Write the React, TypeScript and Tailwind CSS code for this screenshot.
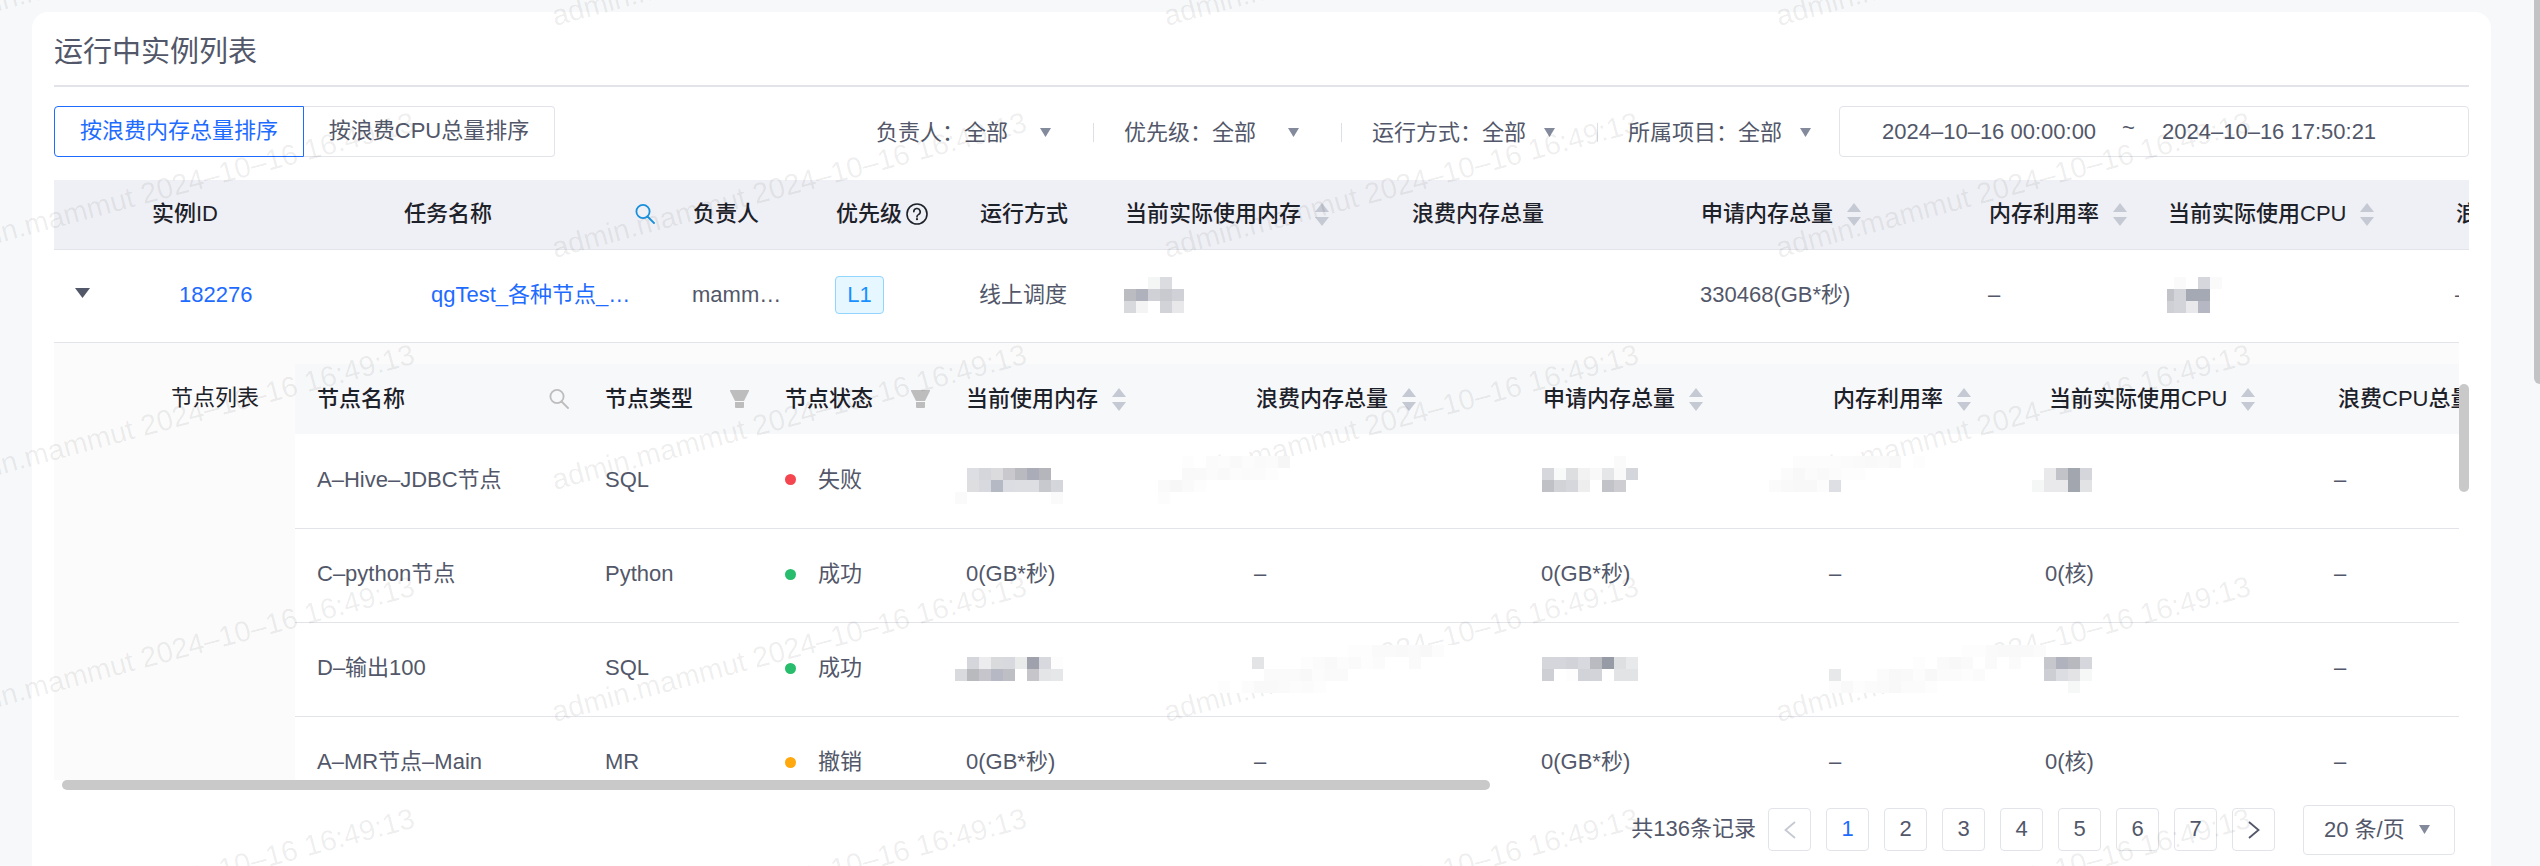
import { useState } from "react"
import type { ReactNode } from "react"

interface MosaicRun {
    x: number
    row: number
    colors: string
}

interface NodeRow {
    name: string
    type: string
    status: "失败" | "成功" | "撤销"
    memory: string
    wasted: string
    applied: string
    usage: string
    cpu: string
    wastedCpu: string
    masked?: MosaicRun[]
}

const CELL = 12

const instanceMemoryMosaic: MosaicRun[] = [
    { x: 24, row: 0, colors: "f4f5f5 dbdcdf" },
    { x: 0, row: 1, colors: "bbbcc2 afb2bd d0d1d6 c9cacf d0d1d6" },
    { x: 0, row: 2, colors: "d8d9dc f4f4f5 ffffff d2d3d8 e8e8ea" },
]

const instanceCpuMosaic: MosaicRun[] = [
    { x: 7, row: 0, colors: "fafafa ffffff d6d7dc fafafa" },
    { x: -5, row: 1, colors: "c2c3c8 d3d4d9 a5a9b3 a5a9b3" },
    { x: -5, row: 2, colors: "cfd0d5 d3d4d9 e9e9eb b5b8c3" },
]

const hiveMosaic: MosaicRun[] = [
    { x: 12, row: 1, colors: "dddee3 d5d6db dbdbdd c8c8cd b9babf aaadb7 b5b6bb" },
    { x: 12, row: 2, colors: "dedee0 d8d9de b5b9c4 dcdde2 dddee2 dddee2 c8c9ce d5d6db" },
    { x: 0, row: 3, colors: "fafafa" },
    { x: 96, row: 3, colors: "fafafa" },
    { x: 227, row: 0, colors: "fdfdfd ffffff fbfbfb fcfcfc f9f9f9 fcfcfc fafafa fbfbfb f6f6f6" },
    { x: 227, row: 1, colors: "f9f9f9 f9f9f9 fbfbfb f9f9f9 fcfcfc fbfbfb fbfbfb fdfdfd" },
    { x: 203, row: 2, colors: "fafafa f7f7f7 fafafa fdfdfd" },
    { x: 203, row: 3, colors: "fcfcfc" },
    { x: 659, row: 0, colors: "fafafa" },
    { x: 587, row: 1, colors: "d6d7dc f8fafa dddee0 f2f2f2 f9f9f9 e5e6e7 f9f9f9 d5d6dc" },
    { x: 587, row: 2, colors: "c0c1c7 d2d3d7 d6d7dc eeeeef ffffff c2c3c9 cdcdd2" },
    { x: 838, row: 0, colors: "fcfcfc fcfcfc fcfcfc fcfcfc fbfbfb fafafa f9f9f9 fafafa f8f8f8 ffffff fdfdfd" },
    { x: 826, row: 1, colors: "fbfbfb f8f8f8 fbfbfb f9f9f9 fbfbfb fdfdfd fdfdfd" },
    { x: 814, row: 2, colors: "fbfbfb f9f9f9 f8f8f8 f8f8f8 fcfcfc dedfe4" },
    { x: 1089, row: 1, colors: "e9e9eb c2c3c8 a2a6af d5d6db" },
    { x: 1077, row: 2, colors: "f5f7f7 e9e9eb e9e9eb a2a6af e2e3e5" },
]

const outputMosaic: MosaicRun[] = [
    { x: 12, row: 1, colors: "d5d6db ececee d9dadc d8d9de e9eaea 9fa2ad d8d9de fdfdfd" },
    { x: 0, row: 2, colors: "d9dade b9babe c5c5cb b6b9c4 bebfc4 ffffff c5c5ca e4e5e7 e6e7e9" },
    { x: 297, row: 1, colors: "e3e4e6" },
    { x: 393, row: 0, colors: "fdfdfd fdfdfd fafafa fafafa f9f9f9 fafafa f8f8f8 fcfcfc" },
    { x: 346, row: 1, colors: "fdfdfd fbfbfb f9f9f9 fcfcfc fafafa fdfdfd fbfbfb ffffff ffffff fafafa" },
    { x: 309, row: 2, colors: "fafafa fafafa fafafa f8f8f8 fcfcfc fafafa fafafa" },
    { x: 263, row: 3, colors: "fdfdfd ffffff fcfcfc f9f9f9 f9f9f9 fafafa fcfcfc fbfbfb fdfdfd" },
    { x: 587, row: 1, colors: "d5d6db d5d6db d2d3d8 d8d9de babbc0 969ba6 dedfe1 e8e9ea" },
    { x: 587, row: 2, colors: "cecfd4 ffffff fdfdfd d2d3d8 d3d4d9 ffffff e2e3e5 e2e3e5" },
    { x: 1007, row: 0, colors: "fdfdfd fdfdfd fafafa f9f9f9 f9f9f9 f9f9f9 fbfbfb" },
    { x: 958, row: 1, colors: "fdfdfd ffffff fafafa f8f8f8 fafafa ffffff fafafa ffffff fbfbfb" },
    { x: 874, row: 2, colors: "e7e8ea" },
    { x: 922, row: 2, colors: "fbfbfb f8f8f8 f9f9f9 fcfcfc f8f8f8 fbfbfb fbfbfb fdfdfd fbfbfb" },
    { x: 874, row: 3, colors: "fcfcfc f9f9f9 fdfdfd fbfbfb fafafa f8f8f8 fbfbfb fbfbfb fdfdfd" },
    { x: 1089, row: 1, colors: "c6c7cc b0b3bd b8b9be d6d7dc" },
    { x: 1089, row: 2, colors: "cdced3 dcdde2 e3e3e5 f6f8f7" },
    { x: 1113, row: 3, colors: "f6f8f7" },
]

const nodes: NodeRow[] = [
    { name: "A–Hive–JDBC节点", type: "SQL", status: "失败", memory: "", wasted: "", applied: "", usage: "", cpu: "", wastedCpu: "–", masked: hiveMosaic },
    { name: "C–python节点", type: "Python", status: "成功", memory: "0(GB*秒)", wasted: "–", applied: "0(GB*秒)", usage: "–", cpu: "0(核)", wastedCpu: "–" },
    { name: "D–输出100", type: "SQL", status: "成功", memory: "", wasted: "", applied: "", usage: "", cpu: "", wastedCpu: "–", masked: outputMosaic },
    { name: "A–MR节点–Main", type: "MR", status: "撤销", memory: "0(GB*秒)", wasted: "–", applied: "0(GB*秒)", usage: "–", cpu: "0(核)", wastedCpu: "–" },
]

const statusColor = {
    失败: "bg-[#f5454f]",
    成功: "bg-[#27bd6c]",
    撤销: "bg-[#ffa90f]",
}

const watermarkColumns = [-59, 553, 1165, 1777]
const watermarkRows = [26, 258, 490, 722, 954]

function Mosaic({ runs, width, height, className }: { runs: MosaicRun[]; width: number; height: number; className?: string }) {
    return (
        <svg width={width} height={height} className={className} shapeRendering="crispEdges" aria-hidden="true">
            {runs.map((run) =>
                run.colors.split(" ").map((color, i) => (
                    <rect
                        key={`${run.x}-${run.row}-${i}`}
                        x={run.x + i * CELL}
                        y={run.row * CELL}
                        width={CELL}
                        height={CELL}
                        fill={`#${color}`}
                    />
                ))
            )}
        </svg>
    )
}

function SortIcon() {
    return (
        <svg width="14" height="23" viewBox="0 0 14 23" fill="#c5c9d3" aria-hidden="true">
            <path d="M7 0l7 9H0z" />
            <path d="M7 23l7-9H0z" />
        </svg>
    )
}

function SearchIcon({ className }: { className: string }) {
    return (
        <svg width="20" height="20" viewBox="0 0 20 20" fill="none" stroke="currentColor" strokeWidth="1.8" strokeLinecap="round" className={className} aria-hidden="true">
            <circle cx="8" cy="7.5" r="6.6" />
            <path d="M12.5 12.5L19 19" />
        </svg>
    )
}

function FunnelIcon() {
    return (
        <svg width="19" height="18" viewBox="0 0 19 18" fill="#bdbdbe" aria-hidden="true">
            <path d="M0 0h19v1l-5 10H5L0 1z" />
            <path d="M5 12h9v5a1 1 0 0 1-1 1H6a1 1 0 0 1-1-1z" />
        </svg>
    )
}

function HelpIcon() {
    return (
        <svg width="22" height="22" viewBox="0 0 22 22" fill="none" stroke="#1d2129" strokeWidth="1.6" aria-hidden="true">
            <circle cx="11" cy="11" r="10" />
            <path d="M7.8 8.8a3.2 3.2 0 1 1 4.6 2.8c-.9.5-1.4 1-1.4 2v.4" strokeLinecap="round" />
            <circle cx="11" cy="16.2" r="1.1" fill="#1d2129" stroke="none" />
        </svg>
    )
}

function CaretIcon({ className }: { className?: string }) {
    return (
        <svg width="11" height="9" viewBox="0 0 11 9" fill="#838a9b" className={className} aria-hidden="true">
            <path d="M0 0h11L5.500 9z" />
        </svg>
    )
}

function Filter({ id, label, selectWidth }: { id: string; label: string; selectWidth: string }) {
    return (
        <div className="flex items-center">
            <label htmlFor={id}>{label}：</label>
            <span className={`relative flex items-center ${selectWidth}`}>
                <select id={id} className="w-full appearance-none bg-transparent outline-none">
                    <option>全部</option>
                </select>
                <CaretIcon className="pointer-events-none absolute right-0" />
            </span>
        </div>
    )
}

function Divider() {
    return <span className="ml-[42px] mr-[30px] h-[19px] w-px bg-[#dddfe6]" />
}

function HeadCell({ children, sortable, className = "pl-[22px]" }: { children: ReactNode; sortable?: boolean; className?: string }) {
    return (
        <th className={`font-medium ${className}`}>
            <div className="flex items-center gap-3.5">
                {children}
                {sortable && (
                    <button type="button" aria-label="排序">
                        <SortIcon />
                    </button>
                )}
            </div>
        </th>
    )
}

function Columns({ widths }: { widths: number[] }) {
    return (
        <colgroup>
            {widths.map((width, i) => (
                <col key={i} style={{ width }} />
            ))}
        </colgroup>
    )
}

const instanceColumns = [76, 252, 289, 143, 144, 145, 287, 289, 288, 179, 288, 320]
const nodeColumns = [288, 180, 181, 288, 287, 288, 216, 289, 288]

function NodeTable() {
    return (
        <table className="w-[2305px] table-fixed bg-white text-left">
            <Columns widths={nodeColumns} />
            <thead className="h-[70px] bg-[#f7f8fa] text-[#1d2129]">
                <tr>
                    <th className="pl-[22px] pr-[14px] font-medium">
                        <div className="flex items-center justify-between">
                            节点名称
                            <button type="button" aria-label="搜索节点名称">
                                <SearchIcon className="text-[#bdbdbe]" />
                            </button>
                        </div>
                    </th>
                    <th className="pl-[22px] pr-[14px] font-medium">
                        <div className="flex items-center justify-between">
                            节点类型
                            <button type="button" aria-label="筛选节点类型">
                                <FunnelIcon />
                            </button>
                        </div>
                    </th>
                    <th className="pl-[22px] pr-[14px] font-medium">
                        <div className="flex items-center justify-between">
                            节点状态
                            <button type="button" aria-label="筛选节点状态">
                                <FunnelIcon />
                            </button>
                        </div>
                    </th>
                    <HeadCell sortable>当前使用内存</HeadCell>
                    <HeadCell sortable className="pl-6">浪费内存总量</HeadCell>
                    <HeadCell sortable className="pl-6">申请内存总量</HeadCell>
                    <HeadCell sortable className="pl-[26px]">内存利用率</HeadCell>
                    <HeadCell sortable className="pl-[26px]">当前实际使用CPU</HeadCell>
                    <HeadCell sortable className="pl-[26px]">浪费CPU总量</HeadCell>
                </tr>
            </thead>
            <tbody>
                {nodes.map((node) => (
                    <tr key={node.name} className="h-[94px] border-b border-[#e2e4ea] [&>td]:pb-0.5 [&>td]:pl-[22px]">
                        <td>{node.name}</td>
                        <td>{node.type}</td>
                        <td>
                            <span className="flex items-center gap-[22px]">
                                <span className={`h-[11px] w-[11px] rounded-full ${statusColor[node.status]}`} />
                                {node.status}
                            </span>
                        </td>
                        <td className="relative">
                            {node.memory}
                            {node.masked && (
                                <Mosaic
                                    runs={node.masked}
                                    width={1160}
                                    height={48}
                                    className="absolute left-[11px] top-[22px] z-20 max-w-none bg-white"
                                />
                            )}
                        </td>
                        <td>{node.wasted}</td>
                        <td>{node.applied}</td>
                        <td>{node.usage}</td>
                        <td>{node.cpu}</td>
                        <td>{node.wastedCpu}</td>
                    </tr>
                ))}
            </tbody>
        </table>
    )
}

function Watermark() {
    return (
        <div className="pointer-events-none absolute inset-0 z-10 overflow-hidden" aria-hidden="true">
            <svg className="h-full w-full" fill="#000" fillOpacity="0.07" fontSize="29">
                {watermarkRows.map((y) =>
                    watermarkColumns.map((x) => (
                        <text key={`${x}-${y}`} transform={`translate(${x + 2} ${y}) rotate(-15)`}>
                            admin.mammut 2024–10–16 16:49:13
                        </text>
                    ))
                )}
            </svg>
        </div>
    )
}

export default function App() {
    const [sortBy, setSortBy] = useState("memory")
    const [page, setPage] = useState(1)

    return (
        <div className="relative h-screen overflow-hidden bg-[#f7f8fa] pl-8 pr-[49px] pt-3 font-['Liberation_Sans','Noto_Sans_CJK_SC',sans-serif] text-[22px] leading-8 text-[#525769]">
            <main className="min-h-full rounded-t-2xl bg-white px-[22px]">
                <h1 className="flex h-[75px] items-center border-b-2 border-[#e2e4ea] pt-1.5 text-[29px]">运行中实例列表</h1>

                <div className="mb-[23px] mt-[19px] flex h-[51px] items-center">
                    <div className="flex h-full">
                        <button
                            type="button"
                            onClick={() => setSortBy("memory")}
                            className={`w-[250px] rounded-l border pb-0.5 ${sortBy === "memory" ? "border-[#1e6bff] text-[#1e6bff]" : "border-[#e2e4ea]"}`}
                        >
                            按浪费内存总量排序
                        </button>
                        <button
                            type="button"
                            onClick={() => setSortBy("cpu")}
                            className={`w-[251px] rounded-r border pb-0.5 ${sortBy === "cpu" ? "border-[#1e6bff] text-[#1e6bff]" : "border-l-0 border-[#e2e4ea]"}`}
                        >
                            按浪费CPU总量排序
                        </button>
                    </div>

                    <div className="ml-auto flex items-center pt-0.5">
                        <Filter id="owner" label="负责人" selectWidth="w-[87px]" />
                        <Divider />
                        <Filter id="priority" label="优先级" selectWidth="w-[87px]" />
                        <Divider />
                        <Filter id="mode" label="运行方式" selectWidth="w-[73px]" />
                        <Divider />
                        <Filter id="project" label="所属项目" selectWidth="w-[73px]" />
                    </div>

                    <div className="ml-7 flex h-full w-[630px] items-center rounded border border-[#e2e4ea] pl-[42px]">
                        <input aria-label="开始时间" defaultValue="2024–10–16 00:00:00" className="w-[240px] outline-none" />
                        <span className="w-10 pb-2">~</span>
                        <input aria-label="结束时间" defaultValue="2024–10–16 17:50:21" className="w-[240px] outline-none" />
                    </div>
                </div>

                <div className="overflow-hidden">
                    <table className="w-[2700px] table-fixed text-left">
                        <Columns widths={instanceColumns} />
                        <thead className="h-[69px] border-b border-[#e2e4ea] bg-[#eff0f5] text-[#1d2129]">
                            <tr>
                                <th />
                                <HeadCell>实例ID</HeadCell>
                                <th className="pl-[22px] pr-4 font-medium">
                                    <div className="flex items-center justify-between">
                                        任务名称
                                        <button type="button" aria-label="搜索任务名称">
                                            <SearchIcon className="text-[#1890dc]" />
                                        </button>
                                    </div>
                                </th>
                                <HeadCell>负责人</HeadCell>
                                <th className="pl-[22px] font-medium">
                                    <div className="flex items-center gap-1">
                                        优先级
                                        <HelpIcon />
                                    </div>
                                </th>
                                <HeadCell>运行方式</HeadCell>
                                <HeadCell sortable>当前实际使用内存</HeadCell>
                                <HeadCell>浪费内存总量</HeadCell>
                                <HeadCell sortable>申请内存总量</HeadCell>
                                <HeadCell sortable>内存利用率</HeadCell>
                                <HeadCell sortable>当前实际使用CPU</HeadCell>
                                <HeadCell sortable>浪费CPU总量</HeadCell>
                            </tr>
                        </thead>
                    </table>
                </div>

                <div className="flex h-[530px]">
                    <div className="flex-1 overflow-hidden">
                        <table className="w-[2700px] table-fixed text-left">
                            <Columns widths={instanceColumns} />
                            <tbody>
                                <tr className="h-[93px] border-b border-[#e2e4ea] [&>td]:pb-0.5 [&>td]:pl-[21px]">
                                    <td>
                                        <button type="button" aria-label="收起" className="block pb-1">
                                            <svg width="15" height="10" viewBox="0 0 15 10" fill="#525769">
                                                <path d="M0 0h15L7.500 10z" />
                                            </svg>
                                        </button>
                                    </td>
                                    <td>
                                        <a href="#182276" className="pl-7 text-[#1e6bff]">182276</a>
                                    </td>
                                    <td>
                                        <a href="#task" className="pl-7 text-[#1e6bff]">qgTest_各种节点_…</a>
                                    </td>
                                    <td>mamm…</td>
                                    <td>
                                        <span className="flex h-[38px] w-[49px] items-center justify-center rounded border border-[#91d5ff] bg-[#e6f7ff] text-[#1890ff]">
                                            L1
                                        </span>
                                    </td>
                                    <td>线上调度</td>
                                    <td>
                                        <Mosaic runs={instanceMemoryMosaic} width={60} height={36} />
                                    </td>
                                    <td />
                                    <td>330468(GB*秒)</td>
                                    <td>–</td>
                                    <td>
                                        <Mosaic runs={instanceCpuMosaic} width={55} height={36} />
                                    </td>
                                    <td>–</td>
                                </tr>
                                <tr>
                                    <td colSpan={12} className="bg-[#fbfbfb] p-0">
                                        <div className="flex items-start pt-[21px]">
                                            <div className="w-[241px] shrink-0 pr-9 pt-[18px] text-right text-[#1d2129]">节点列表</div>
                                            <NodeTable />
                                        </div>
                                    </td>
                                </tr>
                            </tbody>
                        </table>
                    </div>
                    <div className="w-2.5 pt-[134px]">
                        <div className="h-[108px] rounded-full bg-[#c9c9ca]" />
                    </div>
                </div>
                <div className="ml-2 h-2.5 w-[1428px] rounded-full bg-[#c9c9ca]" />

                <div className="mt-[15px] flex items-center justify-end pr-3.5">
                    <span className="mr-3 pb-0.5">共136条记录</span>
                    <div className="flex gap-[15px]">
                        <button
                            type="button"
                            aria-label="上一页"
                            disabled={page === 1}
                            onClick={() => setPage(page - 1)}
                            className="flex h-[43px] w-[43px] items-center justify-center rounded border border-[#e2e4ea]"
                        >
                            <svg width="12" height="18" viewBox="0 0 12 18" fill="none" stroke="#c5c9d3" strokeWidth="1.8">
                                <path d="M11 1L1.500 9l9.500 8" />
                            </svg>
                        </button>
                        {[1, 2, 3, 4, 5, 6, 7].map((n) => (
                            <button
                                key={n}
                                type="button"
                                onClick={() => setPage(n)}
                                className={`flex h-[43px] w-[43px] items-center justify-center rounded border border-[#e2e4ea] pb-0.5 ${n === page ? "text-[#1e6bff]" : ""}`}
                            >
                                {n}
                            </button>
                        ))}
                        <button
                            type="button"
                            aria-label="下一页"
                            onClick={() => setPage(page + 1)}
                            className="flex h-[43px] w-[43px] items-center justify-center rounded border border-[#e2e4ea]"
                        >
                            <svg width="12" height="18" viewBox="0 0 12 18" fill="none" stroke="#525769" strokeWidth="1.8">
                                <path d="M1 1l9.500 8L1 17" />
                            </svg>
                        </button>
                    </div>
                    <span className="relative ml-7 flex h-[50px] w-[152px] items-center rounded border border-[#e2e4ea]">
                        <select aria-label="每页条数" className="w-full appearance-none bg-transparent pl-5 outline-none">
                            <option>20 条/页</option>
                        </select>
                        <CaretIcon className="pointer-events-none absolute right-6" />
                    </span>
                </div>
            </main>

            <Watermark />
            <div className="absolute right-0 top-0 h-[384px] w-1.5 rounded-bl-md bg-[#c2c3c5]" />
        </div>
    )
}
